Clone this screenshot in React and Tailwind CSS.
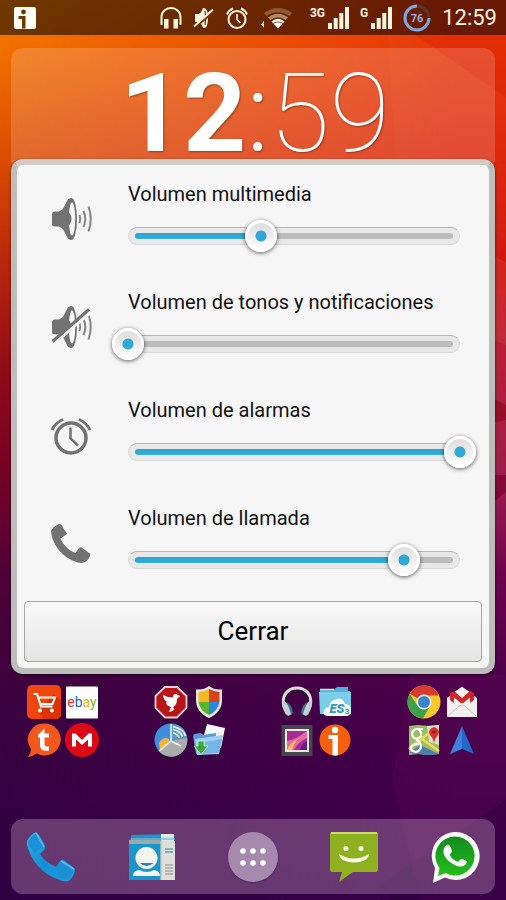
import React, { useState } from 'react'

const CHANNELS = [
  { id: 'media', label: 'Volumen multimedia', value: 40, Icon: SpeakerIcon },
  { id: 'ring', label: 'Volumen de tonos y notificaciones', value: 0, Icon: SpeakerMutedIcon },
  { id: 'alarm', label: 'Volumen de alarmas', value: 100, Icon: AlarmIcon },
  { id: 'call', label: 'Volumen de llamada', value: 83, Icon: PhoneIcon },
]

/* ---------- Wallpaper ---------- */

function Wallpaper() {
  return (
    <svg className="absolute inset-0 h-full w-full" viewBox="0 0 506 900" preserveAspectRatio="none" aria-hidden="true">
      <defs>
        <linearGradient id="wall" x1="0" y1="0" x2="0" y2="1">
          <stop offset="0" stopColor="#f47e00" />
          <stop offset="0.05" stopColor="#f27200" />
          <stop offset="0.18" stopColor="#da4c04" />
          <stop offset="0.28" stopColor="#be2a0c" />
          <stop offset="0.42" stopColor="#8e0a18" />
          <stop offset="0.54" stopColor="#720328" />
          <stop offset="0.64" stopColor="#4e0238" />
          <stop offset="0.78" stopColor="#3a0340" />
          <stop offset="1" stopColor="#2f0042" />
        </linearGradient>
        <linearGradient id="wallRight" x1="0" y1="0" x2="0" y2="1">
          <stop offset="0" stopColor="#e83806" />
          <stop offset="0.08" stopColor="#e43208" />
          <stop offset="0.18" stopColor="#dc2208" />
          <stop offset="0.3" stopColor="#cc1812" />
          <stop offset="0.4" stopColor="#b42038" />
          <stop offset="0.54" stopColor="#9a1c4e" />
          <stop offset="0.64" stopColor="#6c0250" />
          <stop offset="0.76" stopColor="#4a0048" />
          <stop offset="1" stopColor="#380048" />
        </linearGradient>
        <linearGradient id="wallFade" x1="0" y1="0" x2="1" y2="0">
          <stop offset="0" stopColor="#000" />
          <stop offset="0.9" stopColor="#fff" />
        </linearGradient>
        <mask id="wallMask">
          <rect width="506" height="900" fill="url(#wallFade)" />
        </mask>
      </defs>
      <rect width="506" height="900" fill="url(#wall)" />
      <rect width="506" height="900" fill="url(#wallRight)" mask="url(#wallMask)" />
      <path d="M386 0 L396 165 L506 240 V95 L415 35 L386 0z" fill="#fff" opacity="0.02" />
      <path d="M415 35 L506 98 V35z" fill="#c00" opacity="0.14" />
      <path d="M480 250 L506 262 V345 L480 335z" fill="#fff" opacity="0.06" />
      <path d="M480 392 L506 405 V420 L480 426z" fill="#900018" opacity="0.6" />
      <path d="M480 475 H506 V492 L480 512z" fill="#700028" opacity="0.6" />
      <path d="M410 675 L392 780 L420 900 H506 V675z" fill="#90107a" opacity="0.1" />
      <path d="M506 800 L380 885 L390 900 H506z" fill="#200030" opacity="0.25" />
    </svg>
  )
}

/* ---------- Status bar ---------- */

function InfoIcon() {
  return (
    <svg width="22" height="22" viewBox="0 0 22 22" aria-hidden="true">
      <rect width="22" height="22" rx="2" fill="#fffdf5" />
      <circle cx="9.5" cy="5" r="2.4" fill="#6d3a00" />
      <path d="M4.5 9 H11.5 V21.5 H8 V12 H4.5z" fill="#6d3a00" />
    </svg>
  )
}

function HeadphonesIcon() {
  return (
    <svg width="22" height="22" viewBox="0 0 22 22" aria-hidden="true">
      <path d="M1.5 18 V10 C1.5 4.5 6 1 11 1 S20.5 4.5 20.5 10 V18" fill="none" stroke="#fff5e0" strokeWidth="2" />
      <rect x="4" y="12" width="4.5" height="9.5" fill="#fff5e0" />
      <rect x="13.5" y="12" width="4.5" height="9.5" fill="#fff5e0" />
    </svg>
  )
}

function StatusMuteIcon() {
  return (
    <svg width="22" height="22" viewBox="0 0 22 22" aria-hidden="true">
      <path d="M2 7 H6 Q9 5 10 1 Q15 0 15 11 T10 21 Q9 17 6 15 H2z" fill="#fff5e0" />
      <path d="M12 4 Q13.5 11 12 18" fill="none" stroke="#6d3400" strokeWidth="1.2" />
      <path d="M2 20.5 L21 4.5" stroke="#6d3400" strokeWidth="2.2" />
      <path d="M1 19.5 L20 2.5" stroke="#fff5e0" strokeWidth="1.8" />
    </svg>
  )
}

function StatusAlarmIcon() {
  return (
    <svg width="22" height="22" viewBox="0 0 22 22" fill="none" stroke="#fff5e0" aria-hidden="true">
      <circle cx="11" cy="12.5" r="8.5" strokeWidth="2" />
      <path d="M1 7.5 Q3 3 7 1.5 M21 7.5 Q19 3 15 1.5" strokeWidth="2" />
      <path d="M11 7 V12.5 L14.5 16" strokeWidth="1.6" />
    </svg>
  )
}

function WifiIcon() {
  return (
    <svg width="40" height="22" viewBox="0 0 40 22" aria-hidden="true">
      <path d="M2 17.5 L5 14 V20.5 z" fill="#fff5e0" />
      <path d="M5 6 Q19 -4 33 6 L30.5 9 Q19 1.5 7.5 9z" fill="#8d5c34" />
      <path d="M9 10.500 Q19 3 29 10.500 L26.5 13 Q19 7.500 11.5 13z" fill="#b08a66" />
      <path d="M12.5 14.5 Q19 9 25.5 14.5 L19 21.5z" fill="#fffdf5" />
      <path d="M13 17 Q19 13 25 17" fill="none" stroke="#6d2c00" strokeWidth="0.8" />
    </svg>
  )
}

function Signal({ network }) {
  return (
    <span className="flex items-start">
      <span className="pr-[3px] text-[12px] font-bold leading-3">{network}</span>
      <svg width="21" height="22" viewBox="0 0 21 22" fill="#fff5e0" aria-hidden="true">
        <rect x="0" y="16" width="4" height="6" />
        <rect x="5.7" y="11" width="4" height="11" />
        <rect x="11.3" y="6" width="4" height="16" />
        <rect x="17" y="0" width="4" height="22" />
      </svg>
    </span>
  )
}

function Battery() {
  return (
    <svg width="28" height="28" viewBox="0 0 28 28" aria-hidden="true">
      <circle cx="14" cy="14" r="12" fill="none" stroke="#54392f" strokeWidth="3" />
      <path d="M26 14 A12 12 0 1 1 14 2" fill="none" stroke="#7ea6dc" strokeWidth="3" />
      <text x="14" y="18" textAnchor="middle" fill="#8fb2e2" fontSize="11" fontWeight="700">76</text>
    </svg>
  )
}

function StatusBar() {
  return (
    <header className="relative flex h-[35px] items-center justify-between bg-black/55 pl-[14px] pr-[9px] text-[#fff5e0]">
      <InfoIcon />
      <div className="flex items-center gap-[11px]">
        <HeadphonesIcon />
        <StatusMuteIcon />
        <StatusAlarmIcon />
        <WifiIcon />
        <Signal network="3G" />
        <Signal network="G" />
        <Battery />
        <time className="text-[22px] leading-[35px]">12:59</time>
      </div>
    </header>
  )
}

/* ---------- Volume dialog ---------- */

function SpeakerShape() {
  return (
    <>
      <path d="M2 17 Q2 14.5 5 14.5 H9 L13 12 Q16 6 18 2 L21 1 V43 L18 42 Q16 38 13 32 L9 29.5 H5 Q2 29.5 2 27z" fill="#727272" />
      <ellipse cx="21.5" cy="22" rx="5.5" ry="21" fill="#727272" />
      <ellipse cx="22" cy="22" rx="3.2" ry="16.5" fill="#f6f6f6" />
      <path d="M18 15 Q21.5 17 21.5 22 T18 29z" fill="#727272" />
      <g fill="none" stroke="#858585" strokeWidth="2">
        <path d="M29.5 18 Q31 22 29.5 26" />
        <path d="M33.5 14 Q37 22 33.5 30" />
        <path d="M38.5 9.5 Q43 22 38.5 34.5" />
      </g>
    </>
  )
}

function SpeakerIcon() {
  return (
    <svg width="42" height="44" viewBox="0 0 42 44" aria-hidden="true">
      <SpeakerShape />
    </svg>
  )
}

function SpeakerMutedIcon() {
  return (
    <svg width="42" height="44" viewBox="0 0 42 44" aria-hidden="true">
      <SpeakerShape />
      <path d="M4 38.5 L41 7" stroke="#f6f6f6" strokeWidth="3" />
      <path d="M2.5 36.5 L39 4.5" stroke="#727272" strokeWidth="3" />
    </svg>
  )
}

function AlarmIcon() {
  return (
    <svg width="42" height="44" viewBox="0 0 42 44" fill="none" stroke="#727272" aria-hidden="true">
      <circle cx="21" cy="25" r="15" strokeWidth="3.5" />
      <path d="M2 17 Q5 10 13 6.5 M40 17 Q37 10 29 6.5" strokeWidth="3" />
      <path d="M20.5 14.5 V25.5 L28 32.5" strokeWidth="2.5" />
    </svg>
  )
}

function PhoneIcon() {
  return (
    <svg width="42" height="44" viewBox="0 0 42 44" aria-hidden="true">
      <path d="M9 3 Q10.5 2.5 11.5 4 L17 13 L10.5 17.5 C12.5 23 19 30 25.5 32 L29 27 Q30 26 31.5 26.5 L40.5 33 C39.5 38 36 42 31 42 C15 39.5 2 25 1 10 Q3 5.5 9 3z" fill="#727272" />
    </svg>
  )
}

function VolumeSlider({ id, value, onChange }) {
  return (
    <div className="relative flex h-8 items-center">
      <div className="flex h-[18px] w-full items-center rounded-full border border-[#d9d9d9] border-t-[#b5b5b5] bg-[#e8e8e8] px-1.5">
        <div className="h-1.5 w-full overflow-hidden rounded-full bg-[#bcbcbc]">
          <div className="h-full bg-linear-to-b from-[#2ea3d2] to-[#35aeda]" style={{ width: `${value}%` }} />
        </div>
      </div>
      <input
        id={id}
        type="range"
        min="0"
        max="100"
        value={value}
        onChange={(e) => onChange(Number(e.target.value))}
        className="absolute -left-4 m-0 h-8 w-[calc(100%+32px)] cursor-pointer appearance-none bg-transparent outline-none [&::-webkit-slider-thumb]:size-8 [&::-webkit-slider-thumb]:appearance-none [&::-webkit-slider-thumb]:rounded-full [&::-webkit-slider-thumb]:border-[3px] [&::-webkit-slider-thumb]:border-white [&::-webkit-slider-thumb]:bg-[radial-gradient(circle,#2fa8d5_0_5px,transparent_6px),linear-gradient(#dedede,#fdfdfd)] [&::-webkit-slider-thumb]:shadow-[0_1px_4px_rgba(0,0,0,0.65)]"
      />
    </div>
  )
}

function VolumeDialog() {
  const [levels, setLevels] = useState(() => Object.fromEntries(CHANNELS.map((c) => [c.id, c.value])))

  return (
    <section
      role="dialog"
      aria-label="Volumen"
      className="relative -mt-3 rounded-xl border-[6px] border-[#bdbdbb] border-t-[#d3cdc8] bg-[#f6f6f6] pb-1.5 shadow-[0_1px_3px_rgba(0,0,0,0.6)]"
    >
      {CHANNELS.map(({ id, label, Icon }) => (
        <div key={id} className="flex h-[108px] items-center pl-[33px] pr-[29px]">
          <Icon />
          <div className="ml-9 flex-1 pb-1.5">
            <label htmlFor={id} className="mb-3 block text-[20px] leading-7 text-[#111]">
              {label}
            </label>
            <VolumeSlider id={id} value={levels[id]} onChange={(v) => setLevels({ ...levels, [id]: v })} />
          </div>
        </div>
      ))}
      <div className="px-[7px] pt-1">
        <button className="h-[61px] w-full rounded-[4px] border border-[#a5a5a5] bg-linear-to-b from-[#fafafa] to-[#e4e4e4] text-[26px] text-black">
          Cerrar
        </button>
      </div>
    </section>
  )
}

/* ---------- App icons ---------- */

function AppIcon({ name, children }) {
  return (
    <svg width="34" height="34" viewBox="0 0 34 34" role="img" aria-label={name}>
      {children}
    </svg>
  )
}

function ShoppingFolder() {
  return (
    <Folder>
      <AppIcon name="Aliexpress">
        <rect width="34" height="34" rx="5" fill="#f0450c" />
        <path d="M11 26 L27 9 L34 16 V29 Q34 34 29 34 H17z" fill="#dc3204" />
        <path d="M6.5 9 H10 L14 21.5 H25.5 M11 12.5 H28 L25.5 19 H13" fill="none" stroke="#fff" strokeWidth="2" />
        <circle cx="13" cy="25.5" r="2" fill="#fff" />
        <circle cx="25" cy="25.5" r="2" fill="#fff" />
      </AppIcon>
      <AppIcon name="eBay">
        <rect x="1" y="1.5" width="32" height="32" rx="1" fill="#fff" />
        <text x="17" y="21.5" textAnchor="middle" fontSize="14">
          <tspan fill="#e0343a">e</tspan>
          <tspan fill="#1664c4">b</tspan>
          <tspan fill="#f0b010">a</tspan>
          <tspan fill="#85b716">y</tspan>
        </text>
      </AppIcon>
      <AppIcon name="Tapatalk">
        <path d="M17 0.5 A16 16 0 1 1 10 30.5 Q6 33 1 34 Q4 30 4 26 A16 16 0 0 1 17 0.5z" fill="#f2581c" />
        <path d="M11 12 L17.5 5.5 V10.5 H22 V14.5 H17.5 V21.5 Q17.5 24 22 23.5 V27.5 Q13 29 13 22 V14.5 H11z" fill="#fff" />
      </AppIcon>
      <AppIcon name="Mega">
        <circle cx="17" cy="17" r="17" fill="#dc0a16" />
        <path d="M7 23.5 V10.5 H10.5 L17 17 L23.5 10.5 H27 V23.5 H23 V16.5 L17 22 L11 16.5 V23.5z" fill="#fff" />
      </AppIcon>
    </Folder>
  )
}

function ToolsFolder() {
  return (
    <Folder>
      <AppIcon name="Adfree">
        <path d="M11 2 H23 L32.5 11 V23 L23 32.5 H11 L1.5 23 V11z" fill="#ba1416" stroke="#e2d3d3" strokeWidth="1.8" />
        <path d="M9 10 Q15 13 19 12 Q19 9 22 9 L26 11 L23 14 Q23 20 19 22 Q22 26 15 27 L17 22 Q12 21 12 17 L15 18 Q9 15 9 10z" fill="#fff" />
      </AppIcon>
      <AppIcon name="Seguridad">
        <path d="M17 1 Q22 5 30 4.5 V15 Q30 27 17 33 Q4 27 4 15 V4.5 Q12 5 17 1z" fill="#e5e5df" />
        <path d="M17 4 Q12 7 6.5 7 V17 H17z" fill="#f6b91c" />
        <path d="M17 4 Q22 7 27.5 7 V17 H17z" fill="#d9431c" />
        <path d="M6.5 17 H17 V30 Q8 26 6.5 17z" fill="#59b32d" />
        <path d="M27.5 17 H17 V30 Q26 26 27.5 17z" fill="#2b86de" />
      </AppIcon>
      <AppIcon name="Timeriffic">
        <circle cx="17" cy="17" r="16.5" fill="#3f8ddd" />
        <path d="M17 17 L17 1 A16 16 0 0 1 33 15z" fill="#5d9cb8" />
        <path d="M5 20 A7 7 0 0 1 15 16 L16 19 L6 27z" fill="#f3b43a" />
        <path d="M17 18 L33 15 A16 16 0 0 1 5 28z" fill="#a9aca8" />
        <path d="M17 1 V18 L5 28 M17 18 L27 23" fill="none" stroke="#f2f5f5" strokeWidth="1.5" />
        <path d="M19 10 Q24 11 25 15 M19 6.5 Q27 8 28.5 14 M19 3.5 Q30 6 31.5 13" fill="none" stroke="#e8f2f4" strokeWidth="1.6" />
      </AppIcon>
      <AppIcon name="Descargas">
        <path d="M15 1 L33 5 L29 25 L10 20z" fill="#f4f6f7" />
        <path d="M1 13 L2 11 L9 10 L11 12 L24 10 V28 L4 31z" fill="#5a9bd4" />
        <path d="M3 16 L31 12 L27 31 L5 32z" fill="#9fcff0" />
        <path d="M8 20 L30 16 L27 30 L7 31z" fill="#76b6e6" />
        <path d="M6 18 H12 V23 H16 L9 31.5 L2 23 H6z" fill="#38aa38" stroke="#d7f0c9" strokeWidth="0.8" />
      </AppIcon>
    </Folder>
  )
}

function MediaFolder() {
  return (
    <Folder>
      <AppIcon name="Música">
        <path d="M4 22 C1 10 8 3 17 3 S33 10 30 22" fill="none" stroke="#dcdedf" strokeWidth="3" />
        <path d="M6 21 C4 11 10 6 17 6 S30 11 28 21" fill="none" stroke="#231a24" strokeWidth="1.5" />
        <path d="M2 15 Q8 16 12 29 L8 31 Q2 27 2 15z" fill="#c5ced2" />
        <path d="M32 15 Q26 16 22 29 L26 31 Q32 27 32 15z" fill="#c5ced2" />
        <path d="M6 17 Q12 19 13 28 L11 29.5 Q9 21 6 17z M28 17 Q22 19 21 28 L23 29.5 Q25 21 28 17z" fill="#3c7288" />
      </AppIcon>
      <AppIcon name="ES Explorador">
        <path d="M2 4 H17 L19 2 H30 V6 H32 V28 H2z" fill="#4fb1d7" />
        <path d="M1 7 H33 V29 H2z" fill="#7ccdea" />
        <path d="M2 4.5 H16" stroke="#c6e9f4" strokeWidth="1.5" />
        <path d="M9 31 Q4 30 6 25 Q8 22 11 22 Q12 15 19 14 Q25 13 27 19 Q33 19 33 25 Q33 31 28 31z" fill="#f4fafc" />
        <text x="19" y="28" textAnchor="middle" fill="#3599c4" fontSize="13" fontWeight="900" fontStyle="italic">ES</text>
        <text x="29" y="29" textAnchor="middle" fill="#3599c4" fontSize="8" fontWeight="700">3</text>
      </AppIcon>
      <AppIcon name="Galería">
        <rect x="1.5" y="2" width="31" height="31" fill="#45474b" />
        <rect x="5" y="6" width="24" height="23" fill="#efe6ea" />
        <rect x="7" y="8" width="20" height="19" fill="#a52d92" />
        <path d="M7 27 V18 Q15 17 27 8 V15 Q18 19 14 27z" fill="#e86aa5" />
        <path d="M7 27 Q10 20 19 15 Q14 20 12 27z" fill="#fbc05c" />
        <path d="M20 27 Q22 20 27 18 V27z" fill="#6a1f86" />
      </AppIcon>
      <AppIcon name="Info">
        <circle cx="17" cy="17" r="15.5" fill="#f4600e" />
        <circle cx="17" cy="7" r="3.2" fill="#fff" />
        <path d="M10.5 12 H20 V32 Q17 33 14.5 32 V16 H10.5z" fill="#fff" />
      </AppIcon>
    </Folder>
  )
}

function GoogleFolder() {
  return (
    <Folder>
      <AppIcon name="Chrome">
        <circle cx="17" cy="17" r="16.5" fill="#f6cb29" />
        <path d="M17 17 L2.7 8.8 A16.5 16.5 0 0 1 31.3 8.8 L31.5 10.5 H17z" fill="#d83a30" />
        <path d="M2.7 8.8 A16.5 16.5 0 0 0 16 33.5 L23 21 L17 17 L10 20z" fill="#3da04a" />
        <circle cx="17" cy="17" r="7.5" fill="#f3f3f1" />
        <circle cx="17" cy="17" r="6" fill="#3b82cf" />
      </AppIcon>
      <AppIcon name="Gmail">
        <path d="M2 13 L17 1.5 L32 13 V32 H2z" fill="#e5e5e5" />
        <path d="M5 9 L17 3 L29 9 V22 H5z" fill="#f4f4f4" />
        <path d="M5 20 V8 L9 6 L17 13 L25 6 L29 8 V20 H25 V12.5 L17 19 L9 12.5 V20z" fill="#d32426" />
        <path d="M2 13 L12 20 L17 18 L22 20 L32 13 V32 H2z" fill="#f1f1f1" />
        <path d="M2 32 L14 21 Q17 19 20 21 L32 32" stroke="#c8c8c8" strokeWidth="1" fill="none" />
      </AppIcon>
      <AppIcon name="Maps">
        <path d="M2 3 L11 2 L22 3 L32 2 V31 L22 32 L11 31 L2 32z" fill="#97bf66" />
        <path d="M20 3 L32 2 V22 L22 19z" fill="#e3dfc5" />
        <path d="M2 30 L13 22 L32 31 L22 32 L11 31z" fill="#4d7fb0" />
        <path d="M2 26 L22 10 M15 16 L32 28" stroke="#f7da50" strokeWidth="2.5" />
        <path d="M13 7 Q10 5 7 7 Q3 11 7 15 Q11 17 14 13 Q15 9 11 6 H16 M9 16 Q13 19 14 22 Q14 28 9 29 Q3 28 4 24 Q6 21 12 21" fill="none" stroke="#fff" strokeWidth="2.2" />
        <path d="M27 20 Q26 15 23 12 A4.8 4.8 0 1 1 31 12 Q28 15 27 20z" fill="#d8302f" />
        <circle cx="27" cy="9" r="1.6" fill="#7e1414" />
      </AppIcon>
      <AppIcon name="Navegador">
        <path d="M17 3 L29 31 L17 26z" fill="#2467c6" />
        <path d="M17 3 L5 31 L17 26z" fill="#3f82dc" />
      </AppIcon>
    </Folder>
  )
}

function Folder({ children }) {
  return <div className="grid grid-cols-2 gap-1">{children}</div>
}

/* ---------- Dock ---------- */

function Dock() {
  return (
    <nav className="relative mx-[11px] mb-1.5 mt-auto flex h-[75px] items-center justify-between rounded-xl bg-[#a87ca8]/45 px-[15px]">
      <button aria-label="Teléfono">
        <svg width="50" height="52" viewBox="0 0 50 52" aria-hidden="true">
          <defs>
            <linearGradient id="dial" x1="0" y1="0" x2="1" y2="1">
              <stop offset="0" stopColor="#2fb4ee" />
              <stop offset="0.5" stopColor="#128fd6" />
              <stop offset="1" stopColor="#1f9fe2" />
            </linearGradient>
          </defs>
          <path d="M10 1 Q14 4 19 15 Q20 18 16 21 L14 23 Q19 31 30 36 L34 30 Q36 28 38 29 L49 38 Q49 43 44 49 Q41 51 37 50 Q12 43 3 20 Q0 13 1 10 Q5 3 10 1z" fill="url(#dial)" />
          <path d="M2 11 Q6 5 10 2 L18 17 Q13 18 9 22 Q4 18 2 11z" fill="#1a93d6" />
          <path d="M10 2 L18 16 M35 30 L48 38" stroke="#4fc0f2" strokeWidth="1.5" fill="none" />
          <path d="M34 31 L47 40 Q45 46 40 49 Q32 46 30 38z" fill="#1a8fd2" />
        </svg>
      </button>
      <button aria-label="Contactos">
        <svg width="50" height="50" viewBox="0 0 50 50" aria-hidden="true">
          <path d="M4 3 L47 2 L48 12 H3z" fill="#1c96c8" />
          <path d="M4 6 H34 L35 12 H3z" fill="#8aa2ac" />
          <path d="M34 2 H47 V12 H34z" fill="#dfe6e6" />
          <path d="M4 7 H48" stroke="#37b4e0" strokeWidth="1.2" />
          <rect x="2" y="11" width="34" height="37" fill="#1897cd" />
          <path d="M2 8 H34 L36 12 H2z" fill="#9aa9ac" />
          <path d="M34 9 H48 V48 H34z" fill="#dedfd8" />
          <path d="M34 9 V48" stroke="#bcc5c5" strokeWidth="1.5" />
          <circle cx="19.5" cy="26" r="11" fill="#f4f4ee" />
          <path d="M12.5 31 H26.5 Q20 37 12.5 31z" fill="#2785ad" />
          <path d="M6 44 Q6 39 12 38 Q20 42 27 38 Q33 39 33 44z" fill="#f4f4ee" />
          <path d="M38 17 H46 M38 20 H46" stroke="#6aa6bf" strokeWidth="1.5" />
          <path d="M38 33 H46 M38 36 H46 M38 39 H46 M38 42 H46" stroke="#a7aca8" strokeWidth="1.5" />
        </svg>
      </button>
      <button aria-label="Aplicaciones" className="grid size-[50px] place-items-center rounded-full bg-[#a58aae] shadow-[0_1px_2px_rgba(0,0,0,0.3)]">
        <svg width="28" height="18" viewBox="0 0 28 18" fill="#fff" aria-hidden="true">
          <circle cx="4" cy="3" r="2.8" />
          <circle cx="14" cy="3" r="2.8" />
          <circle cx="24" cy="3" r="2.8" />
          <circle cx="4" cy="15" r="2.8" />
          <circle cx="14" cy="15" r="2.8" />
          <circle cx="24" cy="15" r="2.8" />
        </svg>
      </button>
      <button aria-label="Mensajes">
        <svg width="50" height="52" viewBox="0 0 50 52" aria-hidden="true">
          <path d="M3 1 H47 Q49 1 49 3 V39 Q49 41 47 41 H24 L10 51 L13 41 H3 Q1 41 1 39 V3 Q1 1 3 1z" fill="#8fb01f" />
          <path d="M2 2 H48" stroke="#dcea84" strokeWidth="1.5" />
          <circle cx="17" cy="17.5" r="2.5" fill="#f7fbe6" />
          <circle cx="32" cy="17.5" r="2.5" fill="#f7fbe6" />
          <path d="M10 23 Q25 32 40 23 Q39 31 25 31.5 Q11 31 10 23z" fill="#f7fbe6" />
        </svg>
      </button>
      <button aria-label="WhatsApp">
        <svg width="50" height="52" viewBox="0 0 50 52" aria-hidden="true">
          <defs>
            <linearGradient id="wa" x1="0" y1="0" x2="0" y2="1">
              <stop offset="0" stopColor="#128a1c" />
              <stop offset="1" stopColor="#25bf1a" />
            </linearGradient>
          </defs>
          <path d="M25 1 A24 24 0 1 1 15 46.5 L3 52 L5 37 A24 24 0 0 1 25 1z" fill="#fafafa" />
          <path d="M25 5.5 A19.5 19.5 0 1 1 15.5 42 L8 45 L9.5 37 A19.5 19.5 0 0 1 25 5.5z" fill="url(#wa)" />
          <path d="M17 14 Q19 13 20.5 16 L22 20 Q22 21.5 19.5 23.5 Q22 29 28 31 L31 28 Q32 27.5 36.5 30 Q37.5 31 35 34 Q31 37 25 34 Q16 30 13.5 22 Q13 16 17 14z" fill="#fff" />
        </svg>
      </button>
    </nav>
  )
}

export default function App() {
  return (
    <div className="relative flex min-h-screen flex-col overflow-hidden font-['Roboto',sans-serif]">
      <Wallpaper />
      <StatusBar />

      <main className="relative mx-[11px] mt-[13px]">
        {/* Clock widget behind the dialog */}
        <div className="h-[123px] rounded-xl bg-white/17 pl-1 text-center text-[110px] leading-[132px] text-white">
          <time className="[text-shadow:1px_1px_2px_rgba(0,0,0,0.35)]">
            <b className="font-bold">12</b>
            <span className="font-light">:</span>
            <span className="font-thin">59</span>
          </time>
        </div>
        <VolumeDialog />
      </main>

      <div className="relative mb-4 mt-[11px] flex justify-between px-[27px]">
        <ShoppingFolder />
        <ToolsFolder />
        <MediaFolder />
        <GoogleFolder />
      </div>

      <Dock />
    </div>
  )
}
